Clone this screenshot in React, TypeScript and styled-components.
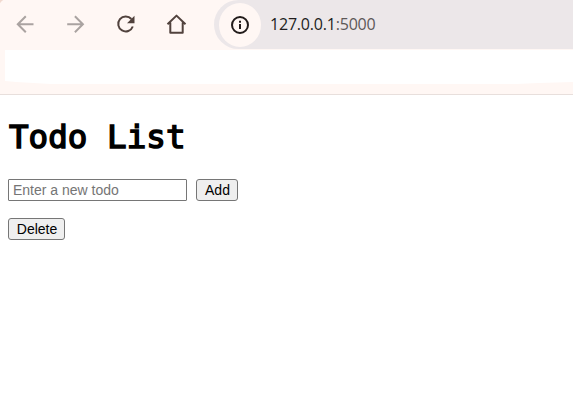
import React from "react";
import styled, { createGlobalStyle } from "styled-components";

const GlobalStyle = createGlobalStyle`
  * { box-sizing: border-box; }
  body { margin: 0; background: #fff; overflow: hidden; }
`;

const Window = styled.div`
  width: 573px;
  height: 414px;
  background: #fff;
`;

const Chrome = styled.header`
  height: 95px;
  background: radial-gradient(circle at 6px 6px, #fff7f4 6px, #f1d9cf 7px) 0 0 / 6px 6px no-repeat, #fff7f4;
  border-bottom: 1px solid #e8dfdc;
`;

const Toolbar = styled.div`
  display: flex;
  height: 49px;
`;

const NavButtons = styled.nav`
  display: flex;
  width: 214px;
  padding-left: 13px;
  gap: 26px;
`;

const NavButton = styled.button<{ $muted?: boolean }>`
  width: 24px;
  height: 49px;
  padding: 0;
  border: 0;
  background: none;
  color: ${(p) => (p.$muted ? "#aaa3a1" : "#51423d")};
  svg { display: block; }
`;

const AddressBar = styled.div`
  flex: 1;
  display: flex;
  align-items: center;
  height: 49px;
  padding-left: 5px;
  background: #ece7e9;
  border-radius: 25px 0 0 25px;
`;

const SiteInfo = styled.span`
  display: flex;
  align-items: center;
  justify-content: center;
  width: 42px;
  height: 44px;
  border-radius: 50%;
  background: #fff7f4;
`;

const Url = styled.span`
  margin: -2px 0 0 9px;
  font: 400 16px/22px "Open Sans", sans-serif;
  letter-spacing: -0.2px;
  color: #5c5858;
`;

const Host = styled.span`
  color: #211d1d;
`;

const BookmarksBar = styled.div`
  height: 35px;
  margin: 1px 0 0 5px;
  background: #fff;
  clip-path: polygon(0 0, 100% 0, 100% 32px, 94% 33px, 90% 34px, 8% 34px, 2% 32px, 0 31px);
`;

const Page = styled.main`
  padding: 0 8px;
`;

const Title = styled.h1`
  margin: 0;
  padding: 22px 0 0 1px;
  height: 84px;
  font: 400 32.5px/40px "DejaVu Sans Mono", monospace;
  letter-spacing: 0.05px;
  -webkit-text-stroke: 1.5px #000;
  color: #000;
`;

const TodoForm = styled.form`
  display: flex;
  gap: 9px;
  margin-bottom: 17px;
`;

const TodoInput = styled.input`
  width: 179px;
  height: 22px;
  padding: 1px 3px 1px 4px;
  border: 1px solid #767676;
  border-radius: 1px;
  font: 14px "Liberation Sans", Arial, sans-serif;
  &::placeholder { color: #757575; }
`;

const Button = styled.button<{ $width: number }>`
  width: ${(p) => p.$width}px;
  height: 22px;
  padding: 0 0 0 1px;
  border: 1px solid #767676;
  border-radius: 3px;
  background: #efefef;
  color: #000;
  font: 14px "Liberation Sans", Arial, sans-serif;
`;

const Icon = ({ children }: { children: React.ReactNode }) => (
  <svg width="24" height="49" viewBox="0 0 24 49" fill="none" stroke="currentColor" strokeWidth="2">
    {children}
  </svg>
);

export default function App() {
  return (
    <Window>
      <GlobalStyle />
      <Chrome>
        <Toolbar>
          <NavButtons>
            <NavButton $muted aria-label="Back">
              <Icon><path d="M20.5 24.2H5M12.8 16.2L4.8 24.2l8 8" /></Icon>
            </NavButton>
            <NavButton $muted aria-label="Forward">
              <Icon><path d="M4.2 24.2H19.7M11.9 16.2l8 8-8 8" /></Icon>
            </NavButton>
            <NavButton aria-label="Reload">
              <Icon>
                <path d="M18.4 19A7.5 7.5 0 1 0 19.8 26.5" />
                <path d="M21.5 15.8v7.5h-7.5z" fill="currentColor" stroke="none" />
              </Icon>
            </NavButton>
            <NavButton aria-label="Home">
              <Icon><path d="M4.5 24.2L13.5 15.6l9 8.6M7.3 22.5v10.2h12.4v-10.2" strokeLinejoin="round" /></Icon>
            </NavButton>
          </NavButtons>
          <AddressBar>
            <SiteInfo>
              <svg width="20" height="20" viewBox="0 0 20 20" fill="none" stroke="#211b1a" strokeWidth="2">
                <circle cx="10" cy="10" r="8" />
                <path d="M10 9v5M10 5.7v2" />
              </svg>
            </SiteInfo>
            <Url><Host>127.0.0.1</Host>:5000</Url>
          </AddressBar>
        </Toolbar>
        <BookmarksBar />
      </Chrome>
      <Page>
        <Title>Todo List</Title>
        <TodoForm onSubmit={(e) => e.preventDefault()}>
          <TodoInput placeholder="Enter a new todo" />
          <Button $width={42}>Add</Button>
        </TodoForm>
        <Button $width={57}>Delete</Button>
      </Page>
    </Window>
  );
}
